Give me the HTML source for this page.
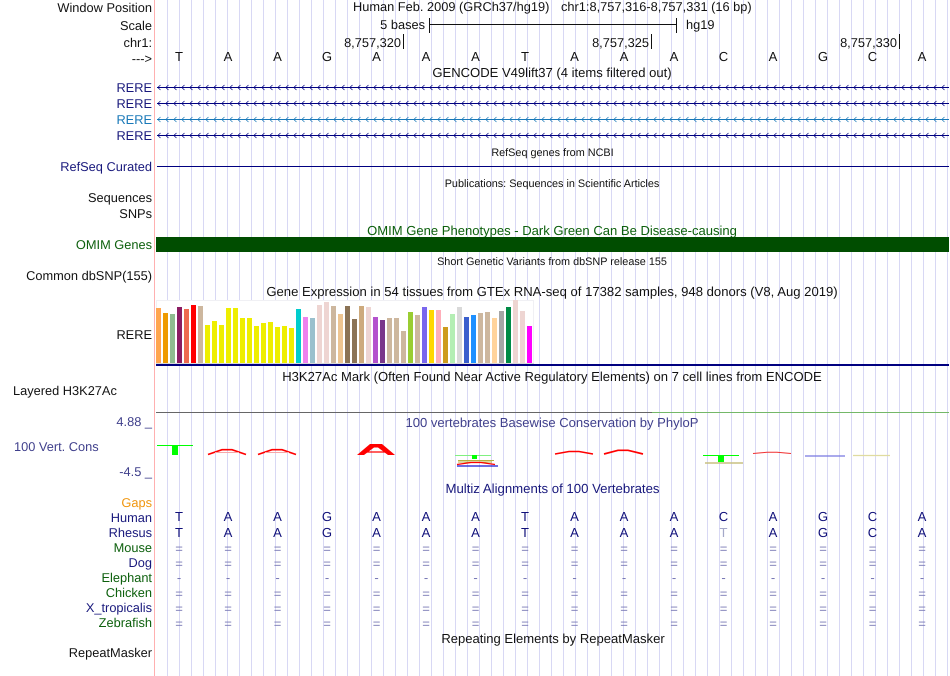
<!DOCTYPE html>
<html><head><meta charset="utf-8"><style>
html,body{margin:0;padding:0;background:#fff;width:950px;height:676px;overflow:hidden}
svg{display:block}
text{font-family:"Liberation Sans",sans-serif;font-size:13.05px;fill:#111;text-rendering:geometricPrecision}
.t{font-size:12.8px}
.l{text-anchor:end;font-size:12.8px}
.c{text-anchor:middle}
.n{fill:#18187c}
.g{fill:#0d600d}
.s{font-size:10.85px}
.b{text-anchor:middle;fill:#10107a;font-size:13.05px}
.e{text-anchor:middle;fill:#7878b4;font-size:13.05px}
.p{fill:#40408c}
</style></head><body>
<svg width="950" height="676" viewBox="0 0 950 676" xmlns="http://www.w3.org/2000/svg">
<defs>
<pattern id="grid" x="167" y="0" width="12" height="10" patternUnits="userSpaceOnUse"><rect x="0" width="1" height="10" fill="#d8d8f4"/></pattern>
<pattern id="ar1" x="157" y="83" width="8" height="9" patternUnits="userSpaceOnUse"><path d="M3.500 2L0.800 4.500L3.500 7" fill="none" stroke="#000080" stroke-width="0.700"/></pattern>
<pattern id="ar2" x="157" y="115" width="8" height="9" patternUnits="userSpaceOnUse"><path d="M3.500 2L0.800 4.500L3.500 7" fill="none" stroke="#1878b8" stroke-width="0.700"/></pattern>
</defs>
<rect width="950" height="676" fill="#fff"/>
<rect x="167" y="0" width="783" height="676" fill="url(#grid)"/>
<rect x="154" y="0" width="1" height="676" fill="#ffb0b0"/>

<!-- header -->
<g class="hdr">
<text x="152" y="12" class="l">Window Position</text>
<text x="152" y="30" class="l">Scale</text>
<text x="152" y="47" class="l">chr1:</text>
<text x="152" y="63" class="l">---&gt;</text>
<text x="353" y="11" class="t">Human Feb. 2009 (GRCh37/hg19)</text>
<text x="561" y="11" class="t">chr1:8,757,316-8,757,331 (16 bp)</text>
<text x="425" y="29" class="l">5 bases</text>
<text x="686" y="29" class="t">hg19</text>
<rect x="429" y="18" width="1" height="15" fill="#111"/>
<rect x="429" y="24" width="248" height="1" fill="#111"/>
<rect x="676" y="18" width="1" height="15" fill="#111"/>
<text x="401" y="47" class="l">8,757,320</text><rect x="403" y="34" width="1" height="15" fill="#111"/>
<text x="649" y="47" class="l">8,757,325</text><rect x="651" y="34" width="1" height="15" fill="#111"/>
<text x="897" y="47" class="l">8,757,330</text><rect x="899" y="34" width="1" height="15" fill="#111"/>
<text y="61" style="text-anchor:middle" x="179 228 277.5 327 376.5 426 475.5 525 574.5 624 674 723.5 773 823 872.5 922">TAAGAAATAAACAGCA</text>
<text x="552" y="77" class="c">GENCODE V49lift37 (4 items filtered out)</text>
</g>

<!-- RERE -->
<text x="152" y="92" class="l n">RERE</text>
<text x="152" y="108" class="l n">RERE</text>
<text x="152" y="124" class="l" style="fill:#1878b8">RERE</text>
<text x="152" y="140" class="l n">RERE</text>
<rect x="157" y="83" width="792" height="9" fill="url(#ar1)"/>
<rect x="157" y="87" width="792" height="1" fill="#000080"/>
<g transform="translate(0,16)"><rect x="157" y="83" width="792" height="9" fill="url(#ar1)"/><rect x="157" y="87" width="792" height="1" fill="#000080"/></g>
<rect x="157" y="115" width="792" height="9" fill="url(#ar2)"/>
<rect x="157" y="119" width="792" height="1" fill="#1878b8"/>
<g transform="translate(0,48)"><rect x="157" y="83" width="792" height="9" fill="url(#ar1)"/><rect x="157" y="87" width="792" height="1" fill="#000080"/></g>

<text x="552.500" y="156" class="c s">RefSeq genes from NCBI</text>
<text x="152" y="171" class="l n">RefSeq Curated</text>
<rect x="157" y="166" width="792" height="1" fill="#000080"/>
<text x="552" y="187" class="c s">Publications: Sequences in Scientific Articles</text>
<text x="152" y="202" class="l">Sequences</text>
<text x="152" y="218" class="l">SNPs</text>
<text x="552" y="235" class="c g">OMIM Gene Phenotypes - Dark Green Can Be Disease-causing</text>
<text x="152" y="249" class="l g">OMIM Genes</text>
<rect x="156" y="237" width="793" height="15" fill="#004d00"/>
<text x="552" y="265" class="c s">Short Genetic Variants from dbSNP release 155</text>
<text x="152" y="280" class="l">Common dbSNP(155)</text>
<text x="552" y="296" class="c" style="font-size:13.1px">Gene Expression in 54 tissues from GTEx RNA-seq of 17382 samples, 948 donors (V8, Aug 2019)</text>
<text x="152" y="339" class="l">RERE</text>

<!-- GTEx bars -->
<rect x="156" y="300" width="378" height="64" fill="#fff"/>
<path d="M156.500 363.500V300.500H533.500V363.500" fill="none" stroke="#f0f0f4"/>
<rect x="156" y="363" width="378" height="1" fill="#d8d8d8"/>
<g>
<rect x="156" y="308" width="5" height="55" fill="#FFA54F"/>
<rect x="163" y="313" width="5" height="50" fill="#EE9A00"/>
<rect x="170" y="314" width="5" height="49" fill="#8FBC8F"/>
<rect x="177" y="307" width="5" height="56" fill="#8B1C62"/>
<rect x="184" y="309" width="5" height="54" fill="#EE6A50"/>
<rect x="191" y="305" width="5" height="58" fill="#FF0000"/>
<rect x="198" y="306" width="5" height="57" fill="#CDB79E"/>
<rect x="205" y="325" width="5" height="38" fill="#EEEE00"/>
<rect x="212" y="321" width="5" height="42" fill="#EEEE00"/>
<rect x="219" y="325" width="5" height="38" fill="#EEEE00"/>
<rect x="226" y="308" width="5" height="55" fill="#EEEE00"/>
<rect x="233" y="308" width="5" height="55" fill="#EEEE00"/>
<rect x="240" y="318" width="5" height="45" fill="#EEEE00"/>
<rect x="247" y="318" width="5" height="45" fill="#EEEE00"/>
<rect x="254" y="326" width="5" height="37" fill="#EEEE00"/>
<rect x="261" y="323" width="5" height="40" fill="#EEEE00"/>
<rect x="268" y="322" width="5" height="41" fill="#EEEE00"/>
<rect x="275" y="327" width="5" height="36" fill="#EEEE00"/>
<rect x="282" y="326" width="5" height="37" fill="#EEEE00"/>
<rect x="289" y="328" width="5" height="35" fill="#EEEE00"/>
<rect x="296" y="309" width="5" height="54" fill="#00CDCD"/>
<rect x="303" y="317" width="5" height="46" fill="#EE82EE"/>
<rect x="310" y="318" width="5" height="45" fill="#9AC0CD"/>
<rect x="317" y="305" width="5" height="58" fill="#EED5D2"/>
<rect x="324" y="302" width="5" height="61" fill="#EED5D2"/>
<rect x="331" y="306" width="5" height="57" fill="#CDB79E"/>
<rect x="338" y="314" width="5" height="49" fill="#EEC591"/>
<rect x="345" y="306" width="5" height="57" fill="#8B7355"/>
<rect x="352" y="319" width="5" height="44" fill="#8B7355"/>
<rect x="359" y="306" width="5" height="57" fill="#CDAA7D"/>
<rect x="366" y="307" width="5" height="56" fill="#EED5D2"/>
<rect x="373" y="317" width="5" height="46" fill="#B452CD"/>
<rect x="380" y="320" width="5" height="43" fill="#7A378B"/>
<rect x="387" y="318" width="5" height="45" fill="#CDB79E"/>
<rect x="394" y="318" width="5" height="45" fill="#CDB79E"/>
<rect x="401" y="331" width="5" height="32" fill="#CDB79E"/>
<rect x="408" y="312" width="5" height="51" fill="#9ACD32"/>
<rect x="415" y="315" width="5" height="48" fill="#CDB79E"/>
<rect x="422" y="307" width="5" height="56" fill="#7A67EE"/>
<rect x="429" y="310" width="5" height="53" fill="#FFD700"/>
<rect x="436" y="310" width="5" height="53" fill="#FFAEB9"/>
<rect x="443" y="327" width="5" height="36" fill="#CD9B1D"/>
<rect x="450" y="314" width="5" height="49" fill="#B4EEB4"/>
<rect x="457" y="307" width="5" height="56" fill="#D9D9D9"/>
<rect x="464" y="317" width="5" height="46" fill="#3A5FCD"/>
<rect x="471" y="315" width="5" height="48" fill="#1E90FF"/>
<rect x="478" y="313" width="5" height="50" fill="#CDB79E"/>
<rect x="485" y="312" width="5" height="51" fill="#CDB79E"/>
<rect x="492" y="318" width="5" height="45" fill="#FFD39B"/>
<rect x="499" y="311" width="5" height="52" fill="#A6A6A6"/>
<rect x="506" y="307" width="5" height="56" fill="#008B45"/>
<rect x="513" y="300" width="5" height="63" fill="#EED5D2"/>
<rect x="520" y="311" width="5" height="52" fill="#EED5D2"/>
<rect x="527" y="326" width="5" height="37" fill="#FF00FF"/>
</g>
<rect x="156" y="364" width="793" height="2" fill="#000080"/>

<text x="552" y="381" class="c">H3K27Ac Mark (Often Found Near Active Regulatory Elements) on 7 cell lines from ENCODE</text>
<text x="13" y="395" class="t">Layered H3K27Ac</text>
<rect x="156" y="412" width="496" height="1" fill="#666"/>
<rect x="652" y="412" width="297" height="1" fill="#74b868"/>

<!-- conservation -->
<text x="552" y="427" class="c p">100 vertebrates Basewise Conservation by PhyloP</text>
<text x="152" y="426" class="l p">4.88 _</text>
<text x="14" y="451" class="p t">100 Vert. Cons</text>
<text x="152" y="476" class="l p">-4.5 _</text>

<rect x="157" y="445" width="36" height="1" fill="#00ff00"/>
<rect x="172" y="445" width="6" height="10" fill="#00ff00"/>
<path d="M208 454.500L222 449.700H232L246 454.500" fill="none" stroke="#f00" stroke-width="1.700"/><path d="M215 452.500H239" stroke="#f8a8a8"/>
<path d="M258 454.500L272 449.700H282L296 454.500" fill="none" stroke="#f00" stroke-width="1.700"/><path d="M265 452.500H289" stroke="#f8a8a8"/>
<path d="M357 455L370 444H382L395 455H388L378 447.500H374L364 455Z" fill="#f00"/><path d="M366 452H386" stroke="#f00" stroke-width="1.200"/>
<rect x="455" y="455" width="36" height="1" fill="#80f080"/>
<rect x="472" y="455" width="5" height="4" fill="#00ff00"/>
<path d="M458 460.500H494M458 462H492" stroke="#b8b040" stroke-width="1"/>
<path d="M457 464.500L471 462.500H481L495 464.500" fill="none" stroke="#f00" stroke-width="1.300"/>
<path d="M457 466H498" stroke="#1818d0" stroke-width="1.300"/>
<path d="M555 454L569 451.500H579L593 454" fill="none" stroke="#f00" stroke-width="1.400"/>
<path d="M604 454L618 450.300H628L643 454" fill="none" stroke="#f00" stroke-width="1.700"/>
<rect x="703" y="455" width="36" height="1" fill="#00ff00"/>
<rect x="718" y="455" width="6" height="7" fill="#00ff00"/>
<path d="M705 463H743" stroke="#c8c080" stroke-width="1.500"/>
<path d="M753 453.500L767 452.300H777L791 453.500" fill="none" stroke="#f03030" stroke-width="1"/>
<path d="M805 456H845" stroke="#7878e0" stroke-width="1.300"/>
<path d="M853 455.500H890" stroke="#e0dca0" stroke-width="1.200"/>

<text x="552.500" y="493" class="c n" style="font-size:13.2px">Multiz Alignments of 100 Vertebrates</text>
<text x="152" y="507" class="l" style="fill:#f0960f">Gaps</text>
<text x="152" y="522" class="l n">Human</text>
<text x="152" y="537" class="l n">Rhesus</text>
<text x="152" y="552" class="l g">Mouse</text>
<text x="152" y="567" class="l n">Dog</text>
<text x="152" y="582" class="l g">Elephant</text>
<text x="152" y="597" class="l g">Chicken</text>
<text x="152" y="612" class="l n">X_tropicalis</text>
<text x="152" y="627" class="l g">Zebrafish</text>

<text y="521" class="b" x="179 228 277.5 327 376.5 426 475.5 525 574.5 624 674 723.5 773 823 872.5 922">TAAGAAATAAACAGCA</text>
<text y="537" class="b" x="179 228 277.5 327 376.5 426 475.5 525 574.5 624 674">TAAGAAATAAA</text>
<text y="537" class="b" x="723.500" style="fill:#a4a8c8">T</text>
<text y="537" class="b" x="773 823 872.5 922">AGCA</text>
<text y="553" class="e" x="179 228 277.5 327 376.5 426 475.5 525 574.5 624 674 723.5 773 823 872.5 922">================</text>
<text y="568" class="e" x="179 228 277.5 327 376.5 426 475.5 525 574.5 624 674 723.5 773 823 872.5 922">================</text>
<text y="582" class="e" x="179 228 277.5 327 376.5 426 475.5 525 574.5 624 674 723.5 773 823 872.5 922">----------------</text>
<text y="598" class="e" x="179 228 277.5 327 376.5 426 475.5 525 574.5 624 674 723.5 773 823 872.5 922">================</text>
<text y="613" class="e" x="179 228 277.5 327 376.5 426 475.5 525 574.5 624 674 723.5 773 823 872.5 922">================</text>
<text y="628" class="e" x="179 228 277.5 327 376.5 426 475.5 525 574.5 624 674 723.5 773 823 872.5 922">================</text>

<text x="553" y="643" class="c">Repeating Elements by RepeatMasker</text>
<text x="152" y="657" class="l">RepeatMasker</text>
</svg>
</body></html>
